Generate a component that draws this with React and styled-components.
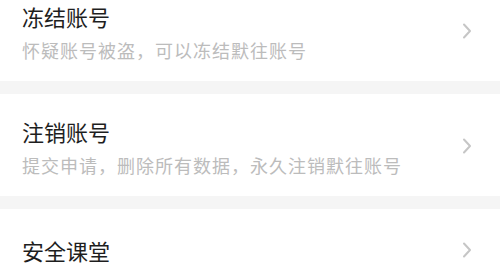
import React from 'react'
import styled, { createGlobalStyle } from 'styled-components'

const GlobalStyle = createGlobalStyle`
  html, body {
    margin: 0;
    padding: 0;
    background: #ffffff;
    overflow: hidden;
  }
  body {
    font-family: "Noto Sans CJK SC", "Noto Sans", sans-serif;
  }
`;

const Page = styled.div`
  width: 500px;
  height: 268px;
  overflow: hidden;
  background: #f5f5f5;
`;

const List = styled.div`
  margin-top: -21px;
  display: flex;
  flex-direction: column;
  gap: 13px;
`;

const Row = styled.div`
  display: flex;
  align-items: center;
  justify-content: space-between;
  background: #ffffff;
  height: ${(props) => (props.single ? "82px" : "102px")};
  padding: ${(props) => (props.single ? "0 28px 0 22px" : "2px 28px 0 22px")};
  box-sizing: border-box;
`;

const Texts = styled.div`
  display: flex;
  flex-direction: column;
  gap: 7px;
`;

const Title = styled.div`
  font-size: 22px;
  line-height: 30px;
  color: #1e1e1e;
`;

const Desc = styled.div`
  font-size: 18px;
  line-height: 24px;
  letter-spacing: 1px;
  color: #bcbcbc;
`;

const Chevron = () => (
  <svg width="10" height="16" viewBox="0 0 10 16" fill="none">
    <path d="M2 1.5 L8 8 L2 14.5" stroke="#c6c6c6" strokeWidth="2" strokeLinecap="round" strokeLinejoin="round" />
  </svg>
);

const items = [
  { title: "冻结账号", desc: "怀疑账号被盗，可以冻结默往账号" },
  { title: "注销账号", desc: "提交申请，删除所有数据，永久注销默往账号" },
  { title: "安全课堂" },
];

const App = () => {
  return (
    <>
      <GlobalStyle />
      <Page>
        <List>
          {items.map((item) => (
            <Row key={item.title} single={!item.desc}>
              <Texts>
                <Title>{item.title}</Title>
                {item.desc && <Desc>{item.desc}</Desc>}
              </Texts>
              <Chevron />
            </Row>
          ))}
        </List>
      </Page>
    </>
  );
};

export default App;
